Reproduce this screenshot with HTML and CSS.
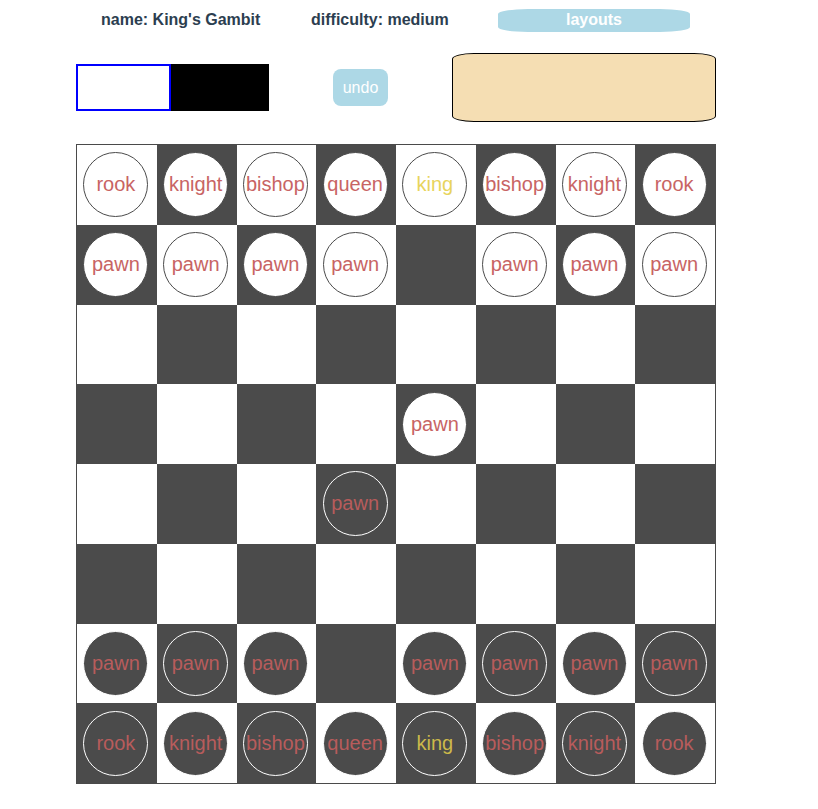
FILE: index.html
```html
<!DOCTYPE html>
<html>
<head>
<meta charset="utf-8">
<link rel="stylesheet" href="styles.css">
</head>
<body>
<div class="app">
  <div class="topbar">
    <span class="info name">name: King's Gambit</span>
    <span class="info diff">difficulty: medium</span>
    <button class="layouts">layouts</button>
  </div>
  <div class="controls">
    <div class="swatch white-swatch"></div>
    <div class="swatch black-swatch"></div>
    <button class="undo">undo</button>
    <div class="panel"></div>
  </div>
  <div class="board" id="board"></div>
</div>
<script src="app.js"></script>
</body>
</html>
```

FILE: styles.css
```css
* { box-sizing: border-box; }
body {
  margin: 8px;
  font-family: "Liberation Sans", Arial, sans-serif;
  color: #2c3e50;
  background: #fff;
}
.app { width: 720px; }
.topbar {
  display: flex;
  align-items: center;
  height: 24px;
  padding-left: 93px;
}
.info { font-weight: bold; font-size: 16px; }
.name { width: 210px; }
.diff { width: 187px; }
.layouts {
  width: 192px;
  height: 23px;
  border: none;
  background: #add8e6;
  color: #fff;
  font-family: "Liberation Sans", Arial, sans-serif;
  font-weight: bold;
  font-size: 16px;
  border-radius: 30px / 5px;
  padding: 0;
}
.controls {
  display: flex;
  align-items: center;
  margin-top: 21px;
  margin-left: 68px;
  height: 69px;
}
.swatch { height: 47px; }
.white-swatch { width: 95px; border: 2px solid #0000ff; background: #fff; }
.black-swatch { width: 98px; background: #000; }
.undo {
  margin-left: 64px;
  width: 55px;
  height: 37px;
  border: none;
  border-radius: 8px;
  background: #add8e6;
  color: #fff;
  font-family: "Liberation Sans", Arial, sans-serif;
  font-size: 16px;
  padding: 0;
}
.panel {
  margin-left: 64px;
  width: 264px;
  height: 69px;
  background: #f5deb3;
  border: 1px solid #000;
  border-radius: 22px / 6px;
}
.board {
  margin-top: 22px;
  margin-left: 68px;
  width: 640px;
  height: 640px;
  border: 1px solid #4a4a4a;
  display: grid;
  grid-template-columns: repeat(8, 1fr);
  grid-template-rows: repeat(8, 1fr);
}
.sq { display: flex; align-items: center; justify-content: center; }
.sq.light { background: #fff; }
.sq.dark { background: #4b4b4b; }
.piece {
  width: 65px;
  height: 65px;
  margin-right: 2px;
  border-radius: 50%;
  display: flex;
  align-items: center;
  justify-content: center;
  font-size: 20px;
  color: #c86464;
}
.piece.w { background: #fff; border: 1px solid #4b4b4b; }
.piece.b { background: #4b4b4b; border: 1px solid #fff; }
.piece.b .lbl { color: #b85c5c; }
.piece.w .lbl.king { color: #e8d45c; }
.piece.b .lbl.king { color: #cdb94a; }
```

FILE: app.js
```js
var back = ["rook","knight","bishop","queen","king","bishop","knight","rook"];
var layout = [];
for (var r = 0; r < 8; r++) layout.push([null,null,null,null,null,null,null,null]);
for (var c = 0; c < 8; c++) {
  layout[0][c] = ["w", back[c]];
  layout[1][c] = ["w", "pawn"];
  layout[6][c] = ["b", "pawn"];
  layout[7][c] = ["b", back[c]];
}
layout[1][4] = null; layout[3][4] = ["w","pawn"];
layout[6][3] = null; layout[4][3] = ["b","pawn"];
var board = document.getElementById("board");
for (var r = 0; r < 8; r++) {
  for (var c = 0; c < 8; c++) {
    var sq = document.createElement("div");
    sq.className = "sq " + ((r + c) % 2 === 0 ? "light" : "dark");
    var p = layout[r][c];
    if (p) {
      var pc = document.createElement("div");
      pc.className = "piece " + p[0];
      var l = document.createElement("span");
      l.className = "lbl" + (p[1] === "king" ? " king" : "");
      l.textContent = p[1];
      pc.appendChild(l);
      sq.appendChild(pc);
    }
    board.appendChild(sq);
  }
}
```
